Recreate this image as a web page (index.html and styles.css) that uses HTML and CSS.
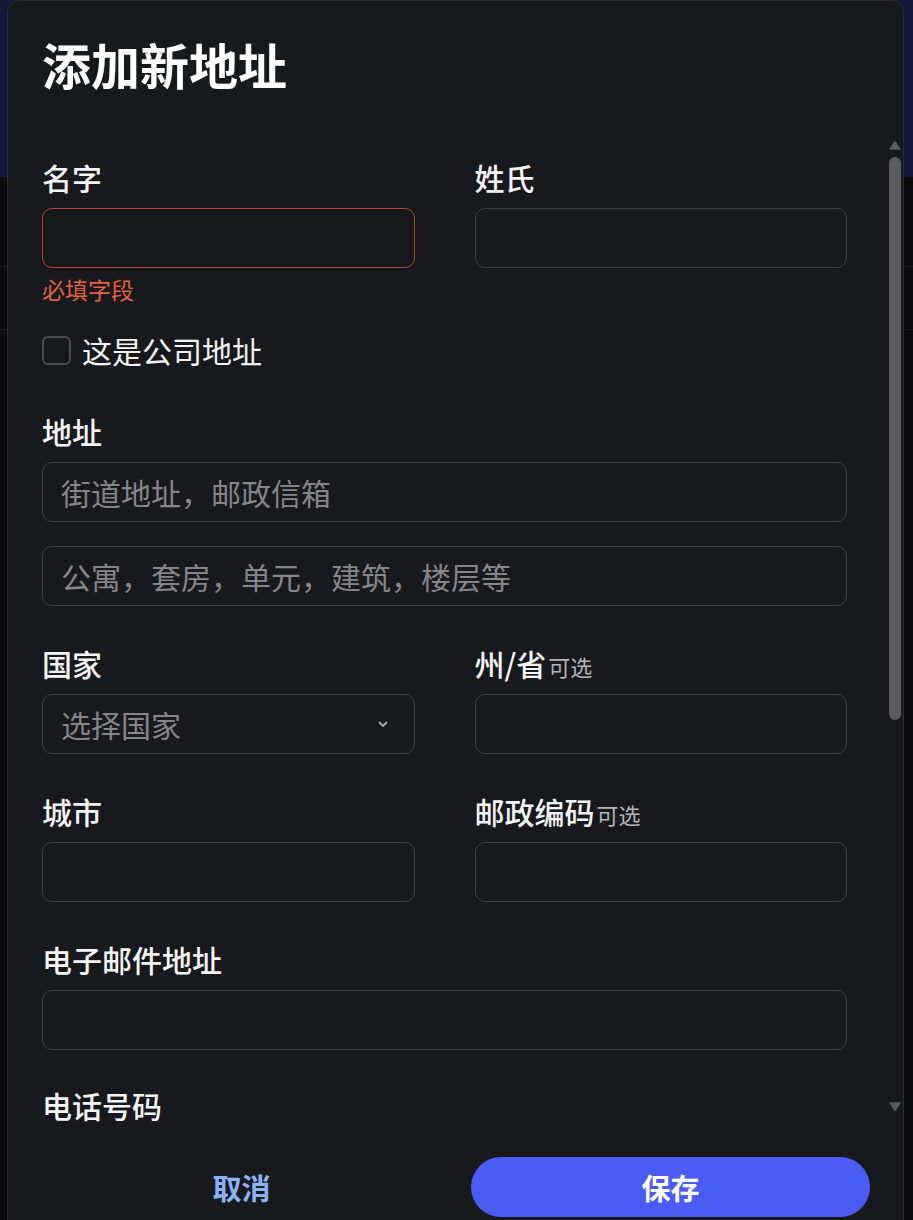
FILE: index.html
```html
<!DOCTYPE html>
<html lang="zh-CN">
<head>
<meta charset="utf-8">
<title>添加新地址</title>
<link rel="stylesheet" href="styles.css">
</head>
<body>
<div class="backdrop">
  <section class="modal">
    <header class="modal-head">
      <h1 class="modal-title">添加新地址</h1>
    </header>
    <div class="modal-body">
      <div class="scroll-content">
        <form class="form">
          <div class="row2">
            <div class="field">
              <label class="label">名字</label>
              <input class="input input-error" type="text">
              <div class="error">必填字段</div>
            </div>
            <div class="field">
              <label class="label">姓氏</label>
              <input class="input" type="text">
            </div>
          </div>

          <label class="check">
            <span class="check-box"></span>
            <span class="check-text">这是公司地址</span>
          </label>

          <div class="field field-addr">
            <label class="label">地址</label>
            <input class="input" type="text" placeholder="街道地址，邮政信箱">
            <input class="input input-second" type="text" placeholder="公寓，套房，单元，建筑，楼层等">
          </div>

          <div class="row2 row-gap1">
            <div class="field">
              <label class="label">国家</label>
              <div class="select">
                <span class="select-text">选择国家</span>
                <svg class="chev" width="10" height="7" viewBox="0 0 10 7"><path d="M1.5 1.5 L5 5 L8.5 1.5" fill="none" stroke="#a6a6ab" stroke-width="1.9" stroke-linecap="round" stroke-linejoin="round"/></svg>
              </div>
            </div>
            <div class="field">
              <label class="label">州/省<span class="opt">可选</span></label>
              <input class="input" type="text">
            </div>
          </div>

          <div class="row2 row-gap2">
            <div class="field">
              <label class="label">城市</label>
              <input class="input" type="text">
            </div>
            <div class="field">
              <label class="label">邮政编码<span class="opt">可选</span></label>
              <input class="input" type="text">
            </div>
          </div>

          <div class="field row-gap2">
            <label class="label">电子邮件地址</label>
            <input class="input" type="text">
          </div>

          <div class="field row-gap3">
            <label class="label">电话号码</label>
            <input class="input" type="text">
          </div>
        </form>
      </div>
      <div class="scrollbar" aria-hidden="true">
        <svg class="sb-arrow" width="16" height="16" viewBox="0 0 16 16"><path d="M8 1.2 Q8.6 1.2 9 1.8 L13.6 9 Q14 9.8 13.2 9.8 L2.8 9.8 Q2 9.8 2.4 9 L7 1.8 Q7.4 1.2 8 1.2 Z" fill="#5b5b5f"/></svg>
        <div class="sb-thumb"></div>
        <div class="sb-track"></div>
        <svg class="sb-arrow" width="16" height="16" viewBox="0 0 16 16"><path d="M8 12.8 Q8.6 12.8 9 12.2 L13.6 5 Q14 4.2 13.2 4.2 L2.8 4.2 Q2 4.2 2.4 5 L7 12.2 Q7.4 12.8 8 12.8 Z" fill="#5b5b5f"/></svg>
      </div>
    </div>
    <footer class="modal-foot">
      <button class="btn btn-cancel" type="button">取消</button>
      <button class="btn btn-save" type="button">保存</button>
    </footer>
  </section>
</div>
</body>
</html>
```
FILE: styles.css
```css
* { box-sizing: border-box; }

html, body {
  margin: 0;
  padding: 0;
  height: 1220px;
  overflow: hidden;
}

body {
  font-family: "Noto Sans CJK SC", "Noto Sans", sans-serif;
  color: #f4f4f5;
  background:
    linear-gradient(to bottom, transparent 266px, #1c1c20 266px, #1c1c20 267px, transparent 267px),
    linear-gradient(to bottom, transparent 329px, #18181c 329px, #18181c 330px, transparent 330px),
    linear-gradient(to bottom, #14183a 0, #14183a 177px, #0b0b0d 177px);
}

.backdrop {
  padding-left: 7px;
  width: 913px;
}

.modal {
  width: 897px;
  height: 1240px;
  background: #18191c;
  border: 1px solid #2d2e32;
  border-radius: 12px 12px 0 0;
  display: flex;
  flex-direction: column;
  overflow: hidden;
}

.modal-head {
  height: 139px;
  flex: none;
  padding: 33px 34px 0;
}

.modal-title {
  margin: 0;
  font-size: 49px;
  line-height: 60px;
  font-weight: 700;
  color: #ffffff;
}

.modal-body {
  height: 990px;
  flex: none;
  display: flex;
}

.scroll-content {
  flex: 1;
  min-width: 0;
  overflow: hidden;
}

.scrollbar {
  width: 16px;
  flex: none;
  display: flex;
  flex-direction: column;
  align-items: center;
  padding-bottom: 16px;
}

.sb-arrow {
  display: block;
  flex: none;
}

.sb-thumb {
  width: 12px;
  height: 563px;
  margin-top: 1px;
  border-radius: 6px;
  background: #5b5b5f;
  flex: none;
}

.sb-track {
  flex: 1;
}

.form {
  padding: 16px 40px 0 34px;
  display: flex;
  flex-direction: column;
}

.row2 {
  display: grid;
  grid-template-columns: 1fr 1fr;
  column-gap: 60px;
  align-items: start;
}

.field {
  display: flex;
  flex-direction: column;
}

.label {
  display: block;
  font-size: 30px;
  line-height: 42px;
  font-weight: 500;
  color: #f4f4f5;
  margin-bottom: 10px;
}

.opt {
  margin-left: 2px;
  font-size: 22px;
  line-height: 1;
  font-weight: 400;
  color: #b4b4b8;
}

.input {
  display: block;
  width: 100%;
  height: 60px;
  border: 1px solid #3f4044;
  border-radius: 10px;
  background: transparent;
  padding: 0 18px;
  font-family: inherit;
  font-size: 30px;
  color: #f4f4f5;
  outline: none;
}

.input::placeholder {
  color: #85858a;
}

.input-error {
  border-color: #b84a34;
}

.input-second {
  margin-top: 24px;
}

.error {
  margin-top: 5px;
  font-size: 23px;
  line-height: 32px;
  color: #e3623f;
}

.check {
  margin-top: 24px;
  display: flex;
  align-items: center;
  gap: 11px;
  height: 42px;
}

.check-box {
  width: 29px;
  height: 29px;
  border: 2px solid #4a4a4f;
  border-radius: 6px;
  flex: none;
}

.check-text {
  font-size: 30px;
  line-height: 42px;
  color: #f4f4f5;
}

.field-addr {
  margin-top: 39px;
}

.row-gap1 {
  margin-top: 36px;
}

.row-gap2 {
  margin-top: 36px;
}

.row-gap3 {
  margin-top: 34px;
}

.select {
  height: 60px;
  border: 1px solid #3f4044;
  border-radius: 10px;
  padding: 0 26px 0 18px;
  display: flex;
  align-items: center;
  justify-content: space-between;
}

.select-text {
  font-size: 30px;
  color: #85858a;
}

.chev {
  display: block;
}

.modal-foot {
  flex: none;
  display: flex;
  gap: 30px;
  padding: 27px 33px 0 34px;
}

.btn {
  flex: 1;
  height: 60px;
  border: none;
  border-radius: 30px;
  font-family: inherit;
  font-size: 29px;
  font-weight: 700;
  background: transparent;
  cursor: pointer;
}

.btn-cancel {
  color: #8cb2f6;
}

.btn-save {
  background: #4b5cf4;
  color: #ffffff;
}
```
